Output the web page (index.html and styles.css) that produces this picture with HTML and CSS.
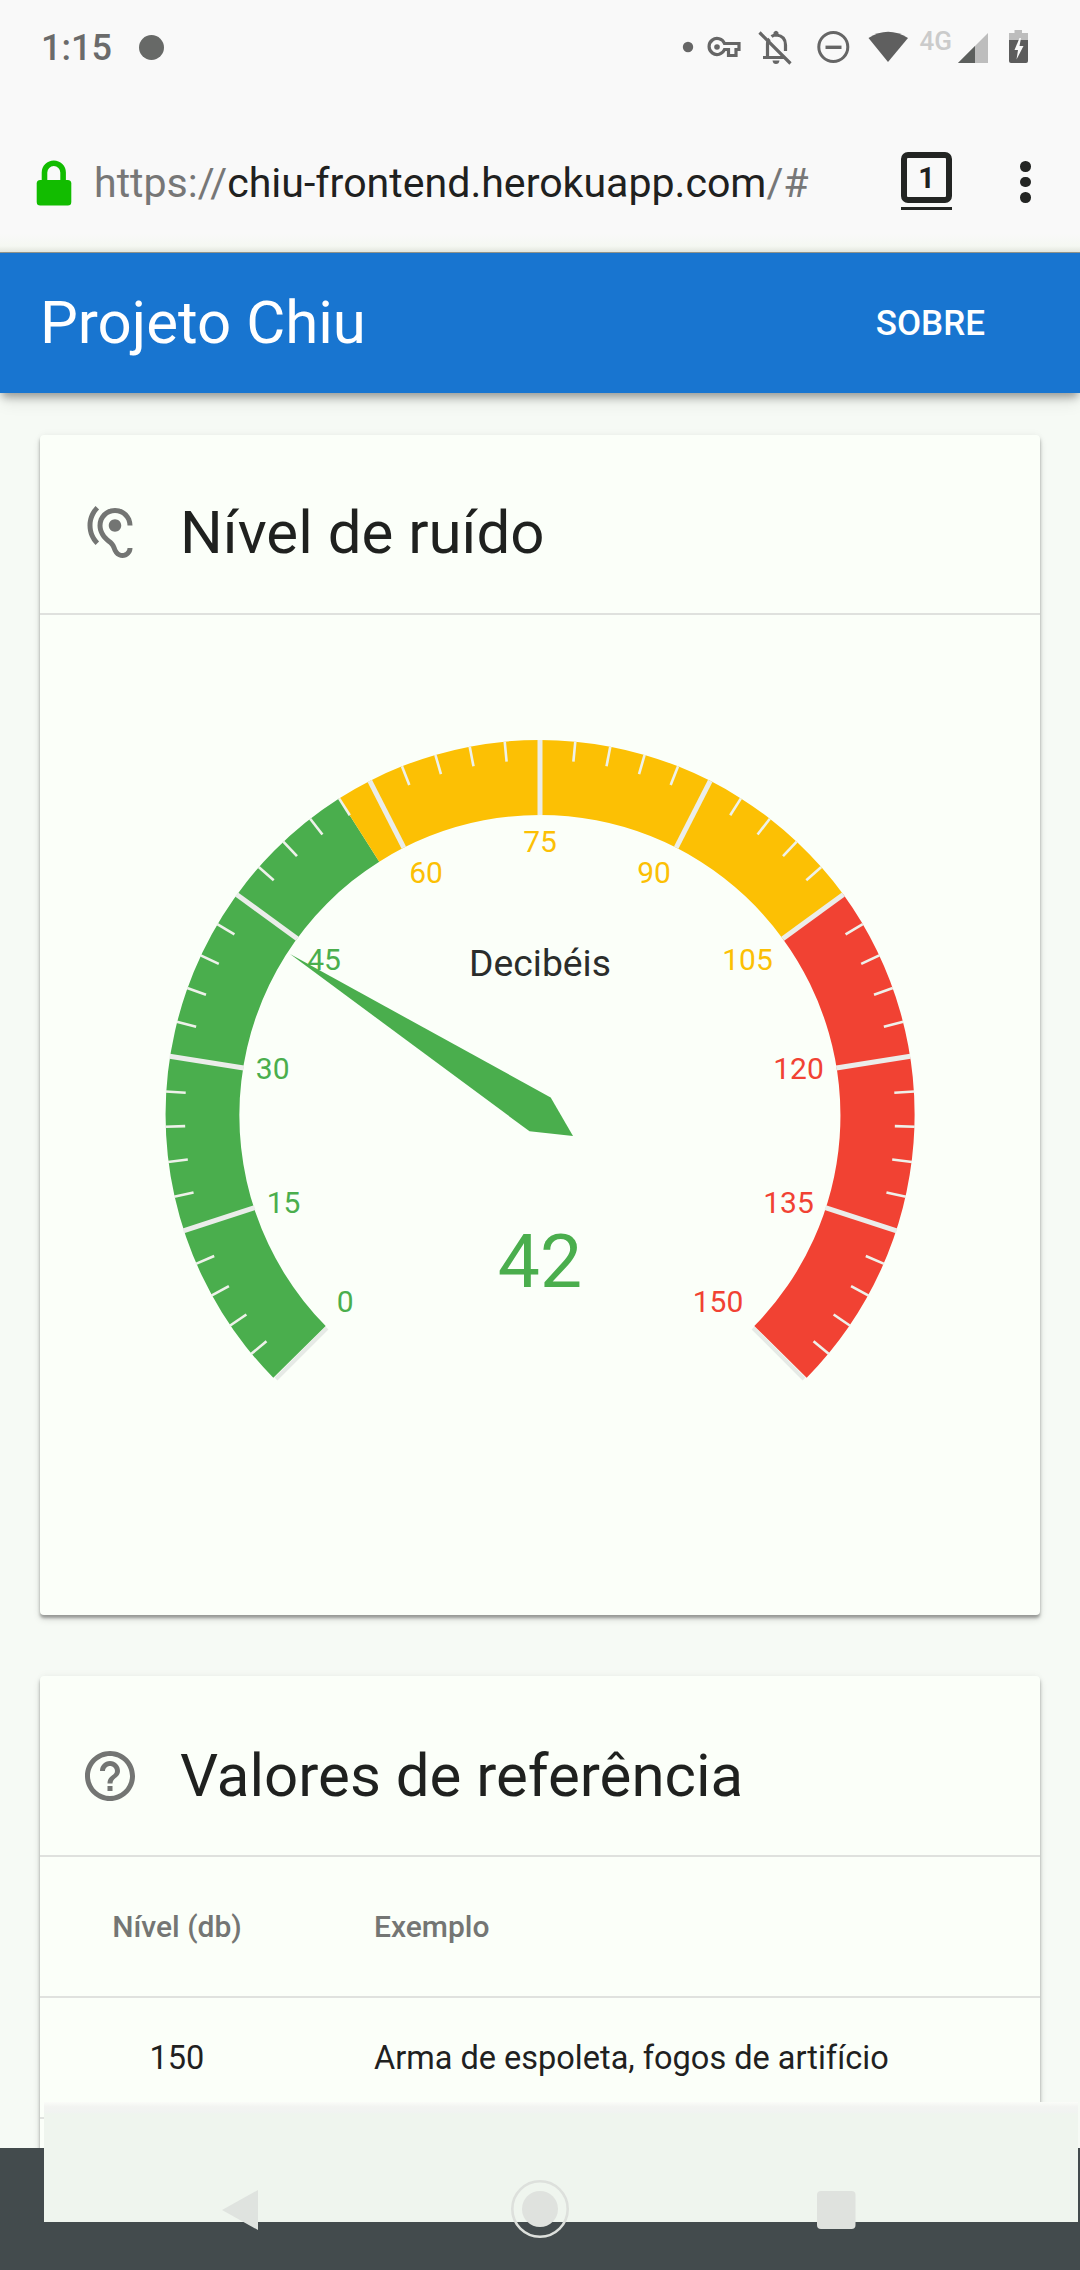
FILE: index.html
```html
<!DOCTYPE html>
<html lang="pt-BR">
<head>
<meta charset="utf-8">
<title>Projeto Chiu</title>
<link rel="stylesheet" href="styles.css">
</head>
<body>
<div class="screen">
  <header class="status-bar">
    <div class="status-left">
      <span class="clock">1:15</span>
      <span class="notification-dot"></span>
    </div>
    <svg class="status-icons" width="360" height="50" viewBox="680 20 360 50">
      <circle cx="688" cy="47" r="5.2" fill="#666"/>
      <path d="M724.5 43.500H739v6h-3v6h-7.500v-6h-4a8 8 0 1 1 0-6z" fill="none" stroke="#666" stroke-width="3.200"/>
      <circle cx="717" cy="47" r="2.800" fill="#666"/>
      <path d="M759.500 32.500l31 31M763 57.500h21M767.500 56V44q0-3 2-5M771.500 36.500q2-1.500 5-1.500 9 1 9 10v6" fill="none" stroke="#666" stroke-width="3.200"/>
      <path d="M773.500 34.500v-2q2.500-3.500 5 0v2zM772.500 60.500h7q-.5 3.500-3.500 3.500t-3.500-3.500z" fill="#666"/>
      <circle cx="833.300" cy="47" r="14.500" fill="none" stroke="#666" stroke-width="3"/>
      <path d="M825.500 47.300h16" stroke="#666" stroke-width="3.400"/>
      <path d="M868.500 38q19.500-12.500 39.500 0L888 62z" fill="#5f5f5f"/>
      <text x="919.500" y="50" class="network">4G</text>
      <path d="M988 33v30h-30z" fill="#bdbdbd"/>
      <path d="M975 46v17h-17z" fill="#5c5f5d"/>
      <path d="M1014.500 30h7.500v3h6v8h-19v-8h5.500z" fill="#bdbdbd"/>
      <path d="M1009 40h19v21q0 2-2 2h-15q-2 0-2-2z" fill="#5c5c5c"/>
      <path d="M1019.500 38l-5 12h3.500l-1.500 9.500 7-13.500h-4l1.500-8z" fill="#f9f9f9"/>
    </svg>
  </header>

  <div class="browser-bar">
    <svg class="lock" width="36" height="48" viewBox="35 157 36 48">
      <path d="M43.500 183v-11.500a9.300 9.300 0 0 1 18.600 0V183" fill="none" stroke="#12bc00" stroke-width="5.600"/>
      <rect x="35.700" y="179" width="34.600" height="25.500" rx="3.500" fill="#12bc00"/>
    </svg>
    <div class="url">https://<span class="host">chiu-frontend.herokuapp.com</span>/#</div>
    <div class="tabs"><span class="tab-count">1</span></div>
    <div class="menu"><i></i><i></i><i></i></div>
  </div>

  <nav class="app-bar">
    <h1>Projeto Chiu</h1>
    <a class="about">SOBRE</a>
  </nav>

  <main class="content">
    <section class="card noise">
      <div class="card-header">
        <svg class="card-icon" viewBox="0 0 24 24"><path d="M17 20c-.29 0-.56-.06-.76-.15-.71-.37-1.21-.88-1.71-2.380-.51-1.560-1.470-2.290-2.390-3-.79-.61-1.610-1.240-2.320-2.530C9.290 10.980 9 9.930 9 9c0-2.800 2.200-5 5-5s5 2.200 5 5h2c0-3.930-3.070-7-7-7S7 5.070 7 9c0 1.260.38 2.650 1.070 3.900.91 1.650 1.980 2.480 2.850 3.150.81.62 1.390 1.070 1.710 2.050.6 1.820 1.370 2.840 2.730 3.550.51.23 1.070.35 1.640.35 2.210 0 4-1.790 4-4h-2c0 1.100-.9 2-2 2zM7.640 2.640L6.220 1.220C4.230 3.210 3 5.960 3 9s1.230 5.790 3.220 7.780l1.410-1.410C6.010 13.740 5 11.490 5 9s1.010-4.740 2.640-6.360zM11.500 9c0 1.380 1.120 2.500 2.500 2.500s2.500-1.120 2.500-2.500-1.120-2.500-2.500-2.500-2.500 1.120-2.500 2.500z"/></svg>
        <h2>Nível de ruído</h2>
      </div>
      <svg class="gauge" width="1000" height="1000" viewBox="40 615 1000 1000">
        <defs>
          <g id="minor" stroke="#eef1ea" stroke-width="2.600">
            <path d="M0-375v20" transform="rotate(5.400)"/>
            <path d="M0-375v20" transform="rotate(10.800)"/>
            <path d="M0-375v20" transform="rotate(16.200)"/>
            <path d="M0-375v20" transform="rotate(21.600)"/>
          </g>
          <path id="major" d="M0-375v75" stroke="#ebedea" stroke-width="5"/>
        </defs>
        <g transform="translate(540 1115)">
          <path d="M-264 264l51-51M264 264l-51-51" stroke="#e6eae6" stroke-width="4"/>
          <path class="green" d="M-266.700 262.700A375 375 0 0 1-200.940-316.620L-160.750-253.300A300 300 0 0 0-214.300 211z"/>
          <path class="yellow" d="M-200.940-316.620A375 375 0 0 1 303.380-220.420L242.710-176.340A300 300 0 0 0-160.750-253.300z"/>
          <path class="red" d="M303.380-220.420A375 375 0 0 1 266.700 262.700L214.300 211A300 300 0 0 0 242.710-176.340z"/>
          <use href="#minor" transform="rotate(-135)"/>
          <use href="#minor" transform="rotate(-108)"/>
          <use href="#minor" transform="rotate(-81)"/>
          <use href="#minor" transform="rotate(-54)"/>
          <use href="#minor" transform="rotate(-27)"/>
          <use href="#minor"/>
          <use href="#minor" transform="rotate(27)"/>
          <use href="#minor" transform="rotate(54)"/>
          <use href="#minor" transform="rotate(81)"/>
          <use href="#minor" transform="rotate(108)"/>
          <use href="#major" transform="rotate(-108)"/>
          <use href="#major" transform="rotate(-81)"/>
          <use href="#major" transform="rotate(-54)"/>
          <use href="#major" transform="rotate(-27)"/>
          <use href="#major"/>
          <use href="#major" transform="rotate(27)"/>
          <use href="#major" transform="rotate(54)"/>
          <use href="#major" transform="rotate(81)"/>
          <use href="#major" transform="rotate(108)"/>
        </g>
        <g class="scale green">
          <text x="345.300" y="1311.700">0</text>
          <text x="283.500" y="1213">15</text>
          <text x="272.700" y="1079">30</text>
          <text x="324" y="969.500">45</text>
        </g>
        <g class="scale yellow">
          <text x="426" y="883">60</text>
          <text x="540" y="851.500">75</text>
          <text x="654" y="883">90</text>
          <text x="747.500" y="969.500">105</text>
        </g>
        <g class="scale red">
          <text x="798.500" y="1079">120</text>
          <text x="788.500" y="1213">135</text>
          <text x="718" y="1311.700">150</text>
        </g>
        <text class="gauge-title" x="540" y="976">Decibéis</text>
        <path class="green" d="M290 954L550.700 1097.500 573 1136 529.500 1131.300z"/>
        <text class="reading green" x="540" y="1286.700">42</text>
      </svg>
    </section>

    <section class="card reference">
      <div class="card-header">
        <svg class="card-icon" viewBox="0 0 24 24"><path d="M11 18h2v-2h-2v2zm1-16C6.480 2 2 6.480 2 12s4.480 10 10 10 10-4.480 10-10S17.520 2 12 2zm0 18c-4.410 0-8-3.590-8-8s3.590-8 8-8 8 3.590 8 8-3.590 8-8 8zm0-14c-2.210 0-4 1.790-4 4h2c0-1.100.9-2 2-2s2 .9 2 2c0 2-3 1.750-3 5h2c0-2.250 3-2.500 3-5 0-2.210-1.790-4-4-4z"/></svg>
        <h2>Valores de referência</h2>
      </div>
      <div class="row row-head">
        <div class="level">Nível (db)</div>
        <div>Exemplo</div>
      </div>
      <div class="row">
        <div class="level">150</div>
        <div>Arma de espoleta, fogos de artifício</div>
      </div>
      <div class="row"></div>
    </section>
  </main>

  <footer class="nav-bar"></footer>
  <div class="toast"></div>
  <svg class="nav-icons" width="1080" height="80" viewBox="0 2170 1080 80">
    <path d="M222 2210l36-20v40z" fill="#dfe3df"/>
    <circle cx="540" cy="2209" r="27.700" fill="none" stroke="#dde0dc" stroke-width="2.600"/>
    <circle cx="540" cy="2209" r="18" fill="#dfe2de"/>
    <rect x="817" y="2191" width="38.500" height="38" rx="4" fill="#dfe2de"/>
  </svg>
</div>
</body>
</html>
```
FILE: styles.css
```css
* { box-sizing: border-box; }

body {
  margin: 0;
  font-family: Roboto, "Liberation Sans", sans-serif;
  color: #1f211f;
}

.screen {
  position: relative;
  display: flex;
  flex-direction: column;
  width: 1080px;
  height: 2270px;
  overflow: hidden;
  background: #f6faf5;
}

/* Android status bar */
.status-bar {
  flex: none;
  display: flex;
  justify-content: space-between;
  height: 110px;
  padding: 20px 40px 0 41px;
  background: #f9f9f9;
}

.status-left {
  display: flex;
  align-items: center;
  gap: 27px;
  height: 54px;
}

.clock {
  font-size: 36px;
  font-weight: 500;
  line-height: 54px;
  padding-top: 2px;
  color: #6b6b6b;
}

.notification-dot {
  width: 25px;
  height: 25px;
  border-radius: 50%;
  background: #676967;
}

.network {
  font-size: 26px;
  font-weight: 500;
  fill: #cbcbcb;
}

/* Browser address bar */
.browser-bar {
  flex: none;
  display: flex;
  align-items: flex-start;
  height: 143px;
  padding-left: 36px;
  background: linear-gradient(#f9f9f9 124px, #f5f8f2 136px, #e3e6dd 142px, #90948c 142px);
}

.lock {
  flex: none;
  margin-top: 48px;
}

.url {
  width: 807px;
  margin: 48px 0 0 22px;
  font-size: 41.1px;
  line-height: 50px;
  color: #777;
  white-space: nowrap;
}

.host { color: #1f2120; }

.tabs {
  flex: none;
  width: 51px;
  height: 58px;
  margin-top: 42px;
  border-bottom: 3px solid #232523;
}

.tab-count {
  display: block;
  height: 51px;
  border: 6px solid #232523;
  border-radius: 7px;
  font-size: 29px;
  font-weight: 700;
  line-height: 41px;
  text-align: center;
}

.menu {
  display: flex;
  flex-direction: column;
  gap: 5px;
  margin: 51px 0 0 68px;
}

.menu i {
  width: 10.5px;
  height: 10.5px;
  border-radius: 50%;
  background: #232523;
}

/* Application bar */
.app-bar {
  z-index: 1;
  flex: none;
  display: flex;
  align-items: center;
  justify-content: space-between;
  height: 140px;
  padding: 0 95px 0 40px;
  background: #1875d0;
  color: #fff;
  box-shadow: 0 6px 8px -2px rgba(0, 0, 0, .32), 0 10px 16px -2px rgba(0, 0, 0, .1);
}

.app-bar h1 {
  margin: 0;
  font-size: 60px;
  font-weight: 400;
  line-height: 70px;
}

.about {
  font-size: 35px;
  font-weight: 500;
}

/* Cards */
.content {
  flex: none;
  display: flex;
  flex-direction: column;
  gap: 61px;
  height: 1755px;
  padding: 42px 40px 0;
  overflow: hidden;
}

.card {
  flex: none;
  border-radius: 4px;
  background: #fbfff9;
  box-shadow: 0 3px 3px rgba(0, 0, 0, .3), 0 4px 7px rgba(0, 0, 0, .15), 0 -3px 6px rgba(0, 0, 0, .02);
}

.noise { height: 1180px; }

.card-header {
  display: flex;
  align-items: center;
  gap: 40px;
  height: 180px;
  padding: 18px 40px 0;
  border-bottom: 2px solid #dfe1de;
}

.reference .card-header {
  height: 181px;
  padding-top: 20px;
}

.card-header h2 {
  margin: 0;
  font-size: 60px;
  font-weight: 400;
  line-height: 70px;
}

.card-icon {
  width: 60px;
  height: 60px;
  fill: #737573;
}

/* Gauge */
.gauge { display: block; }
.green { fill: #4aae4d; }
.yellow { fill: #fcc004; }
.red { fill: #f14233; }

.scale {
  font-size: 30px;
  text-anchor: middle;
}

.gauge-title {
  font-size: 37.3px;
  text-anchor: middle;
  fill: #2b2d2b;
}

.reading {
  font-size: 75px;
  text-anchor: middle;
}

/* Reference table */
.row {
  display: grid;
  grid-template-columns: 274px 1fr;
  column-gap: 60px;
  align-items: center;
  height: 121px;
  border-bottom: 2px solid #e0e2df;
  font-size: 32.5px;
}

.row-head {
  height: 141px;
  font-size: 30px;
  font-weight: 500;
  color: #747674;
}

.level { text-align: center; }

/* System navigation, with the blank toast over it */
.nav-bar {
  flex: 1;
  background: #434b4d;
}

.toast {
  position: absolute;
  left: 44px;
  top: 2102px;
  width: 1034px;
  height: 120px;
  background: linear-gradient(#fafcf8, #f2f4f1 5px, #f1f3f1 10px, #eff5ee 12px);
}

.nav-icons {
  position: absolute;
  left: 0;
  top: 2170px;
}
```
